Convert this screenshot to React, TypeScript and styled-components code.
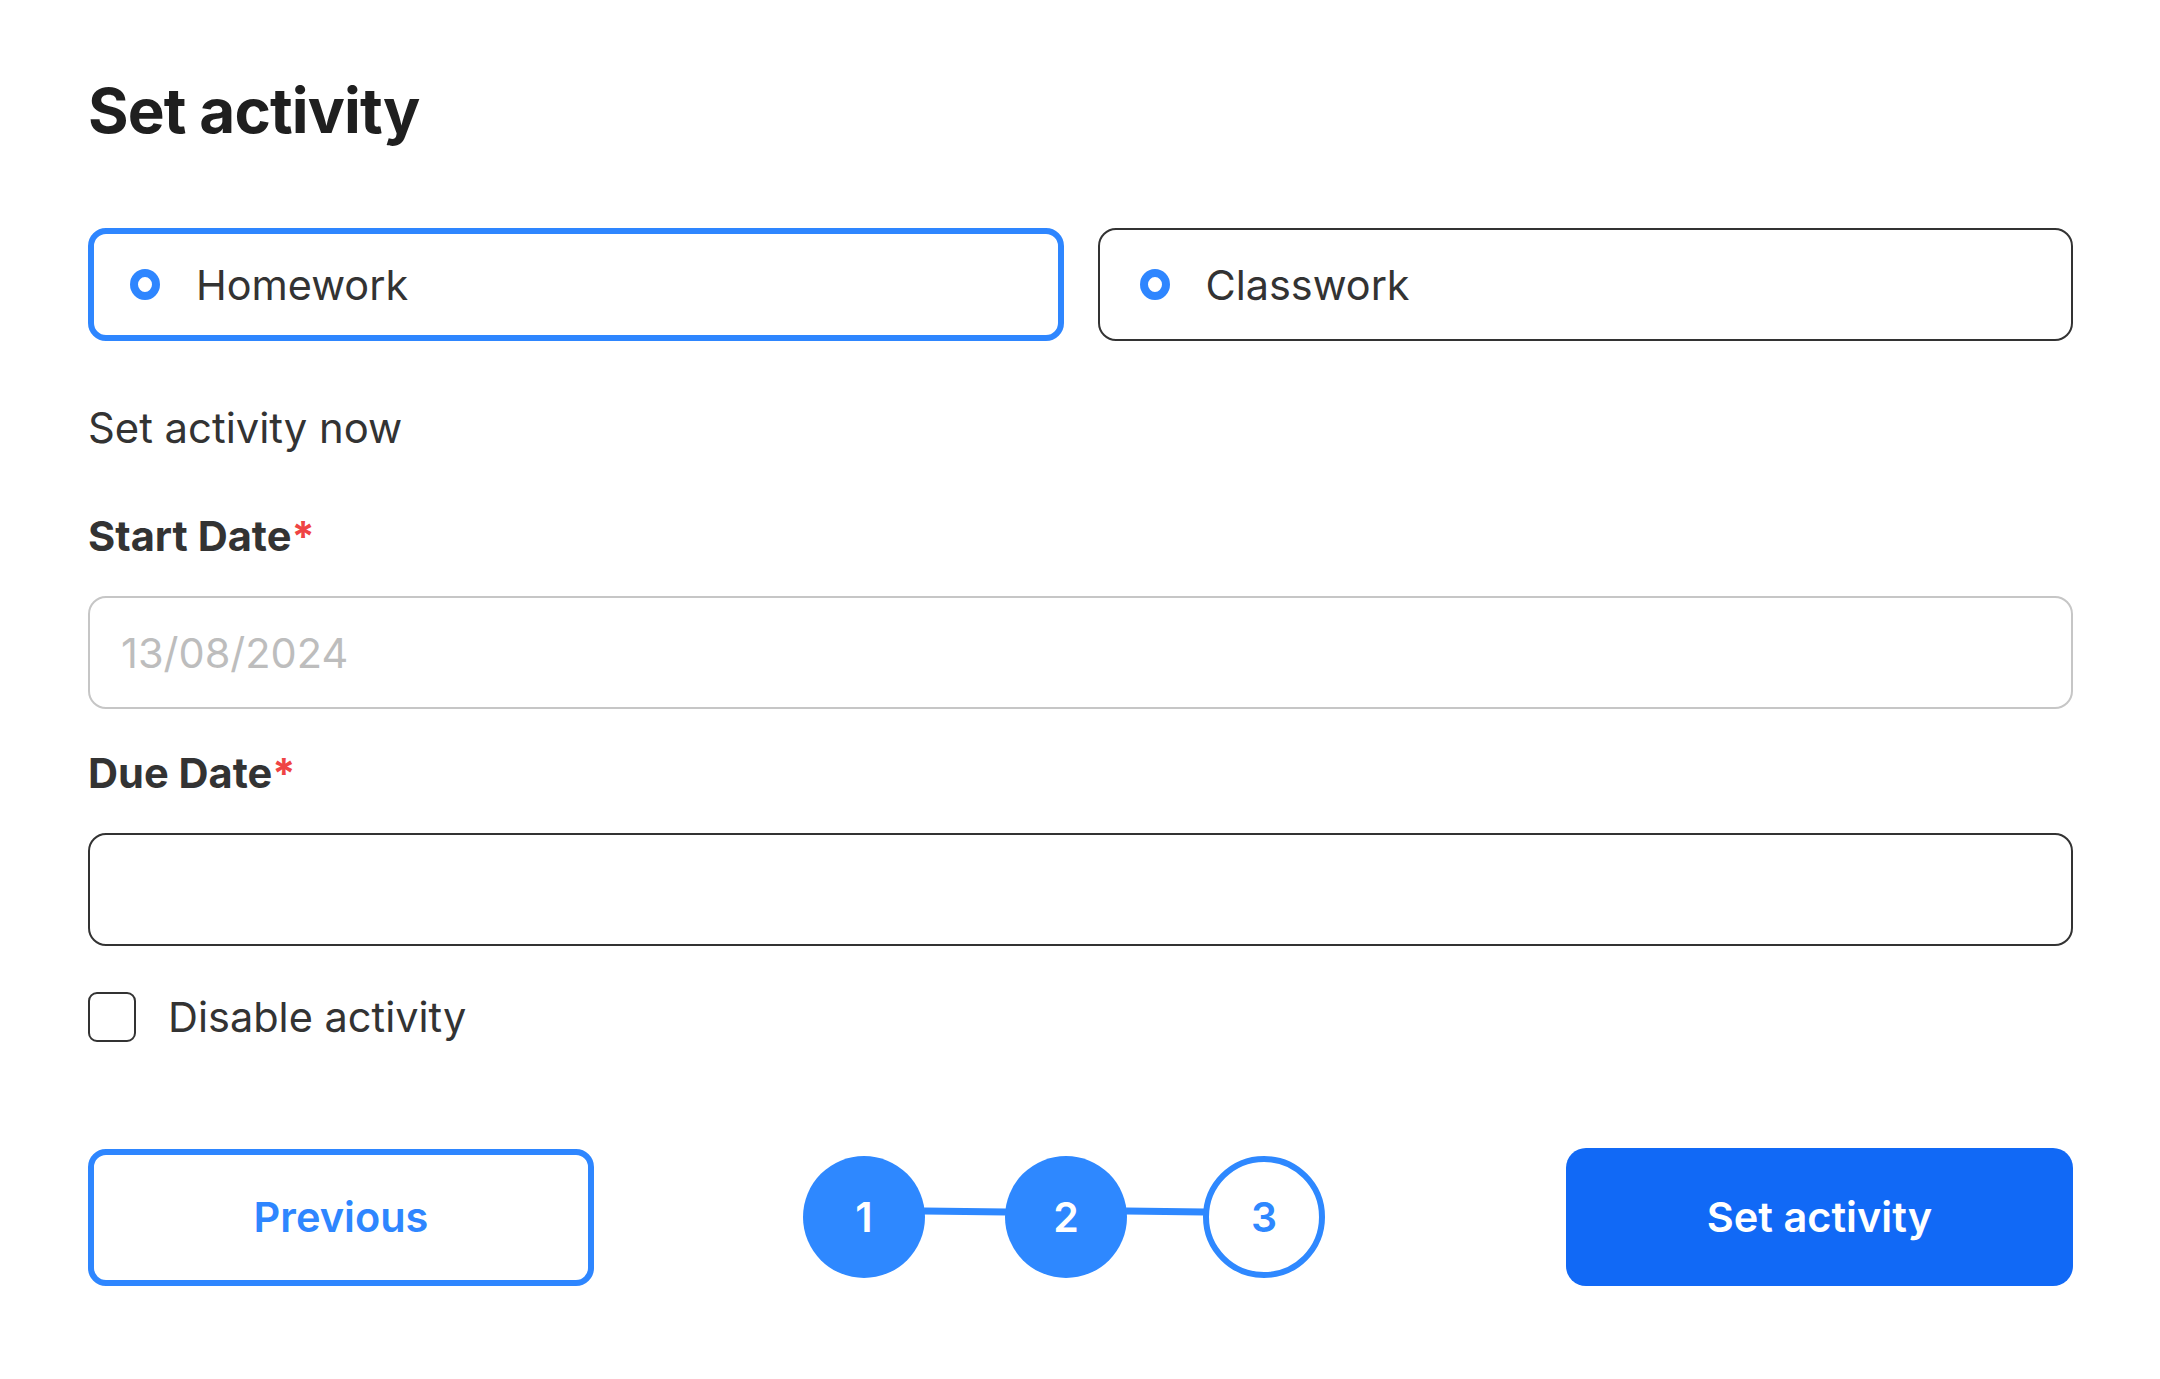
import React from "react";
import styled, { createGlobalStyle } from "styled-components";

const Global = createGlobalStyle`
  html, body { margin: 0; padding: 0; background: #ffffff; }
  body { font-family: Inter, "Noto Sans", "Liberation Sans", sans-serif; color: #333333; }
  * { box-sizing: border-box; }
`;

const Page = styled.div`
  width: 2160px;
  padding: 73px 87px 80px 88px;
  display: flex;
  flex-direction: column;
`;

const Title = styled.h1`
  margin: 0;
  font-size: 62px;
  line-height: 75px;
  font-weight: 700;
  color: #1f1f1f;
  letter-spacing: -0.9px;
`;

const ChoiceRow = styled.div`
  margin-top: 80px;
  display: grid;
  grid-template-columns: 1fr 1fr;
  gap: 34px;
`;

const Choice = styled.label<{ $active?: boolean }>`
  height: 113px;
  display: flex;
  align-items: center;
  gap: 36px;
  border: ${(p) => (p.$active ? "6px solid #2e86ff" : "2px solid #333333")};
  padding-left: ${(p) => (p.$active ? "36px" : "40px")};
  border-radius: 18px;
  font-size: 41.4px;
  color: #333333;
  cursor: pointer;
`;

const RadioDot = styled.span`
  width: 30px;
  height: 31px;
  border-radius: 50%;
  border: 8px solid #2e86ff;
  background: #ffffff;
  flex: none;
`;

const Note = styled.div`
  margin-top: 62px;
  font-size: 41.8px;
  line-height: 50px;
  color: #333333;
`;

const FieldLabel = styled.div<{ $gap: number }>`
  margin-top: ${(p) => p.$gap}px;
  font-size: 41.6px;
  line-height: 48px;
  font-weight: 700;
  color: #333333;
`;

const Required = styled.span`
  color: #ef4444;
`;

const Field = styled.div<{ $muted?: boolean }>`
  margin-top: 36px;
  height: 113px;
  border: 2px solid ${(p) => (p.$muted ? "#c6c6c6" : "#333333")};
  border-radius: 18px;
  display: flex;
  align-items: center;
  padding-left: 31px;
  font-size: 41.5px;
  color: #bdbdbd;
`;

const CheckRow = styled.label`
  margin-top: 46px;
  display: flex;
  align-items: center;
  gap: 32px;
  font-size: 41.5px;
  color: #333333;
`;

const Box = styled.span`
  width: 48px;
  height: 50px;
  border: 2px solid #333333;
  border-radius: 9px;
  flex: none;
`;

const Footer = styled.div`
  margin-top: 106px;
  display: flex;
  align-items: center;
`;

const OutlineButton = styled.button`
  width: 506px;
  height: 137px;
  border: 6px solid #2e86ff;
  border-radius: 18px;
  background: #ffffff;
  color: #2e86ff;
  font-family: inherit;
  font-size: 41.5px;
  font-weight: 600;
`;

const SolidButton = styled.button`
  margin-left: auto;
  width: 507px;
  height: 138px;
  border: none;
  border-radius: 20px;
  background: #1169f6;
  color: #ffffff;
  font-family: inherit;
  font-size: 41.5px;
  font-weight: 600;
`;

const Stepper = styled.div`
  margin-left: 209px;
  display: flex;
  align-items: center;
`;

const Step = styled.div<{ $done?: boolean }>`
  width: 122px;
  height: 122px;
  border-radius: 50%;
  flex: none;
  display: flex;
  align-items: center;
  justify-content: center;
  font-size: 41px;
  font-weight: 600;
  background: ${(p) => (p.$done ? "#2e88ff" : "#ffffff")};
  color: ${(p) => (p.$done ? "#ffffff" : "#2e88ff")};
  border: ${(p) => (p.$done ? "none" : "6px solid #2e88ff")};
`;

const Connector = styled.div<{ $w: number }>`
  width: ${(p) => p.$w}px;
  height: 7px;
  background: #2e88ff;
  margin: 0 -1px;
  transform: translateY(-6px) rotate(0.8deg);
`;

export default function App() {
  return (
    <>
      <Global />
      <Page>
        <Title>Set activity</Title>
        <ChoiceRow>
          <Choice $active>
            <RadioDot />
            Homework
          </Choice>
          <Choice>
            <RadioDot />
            Classwork
          </Choice>
        </ChoiceRow>
        <Note>Set activity now</Note>
        <FieldLabel $gap={59}>
          Start Date<Required>*</Required>
        </FieldLabel>
        <Field $muted>13/08/2024</Field>
        <FieldLabel $gap={40}>
          Due Date<Required>*</Required>
        </FieldLabel>
        <Field />
        <CheckRow>
          <Box />
          Disable activity
        </CheckRow>
        <Footer>
          <OutlineButton>Previous</OutlineButton>
          <Stepper>
            <Step $done>1</Step>
            <Connector $w={82} />
            <Step $done>2</Step>
            <Connector $w={78} />
            <Step>3</Step>
          </Stepper>
          <SolidButton>Set activity</SolidButton>
        </Footer>
      </Page>
    </>
  );
}
